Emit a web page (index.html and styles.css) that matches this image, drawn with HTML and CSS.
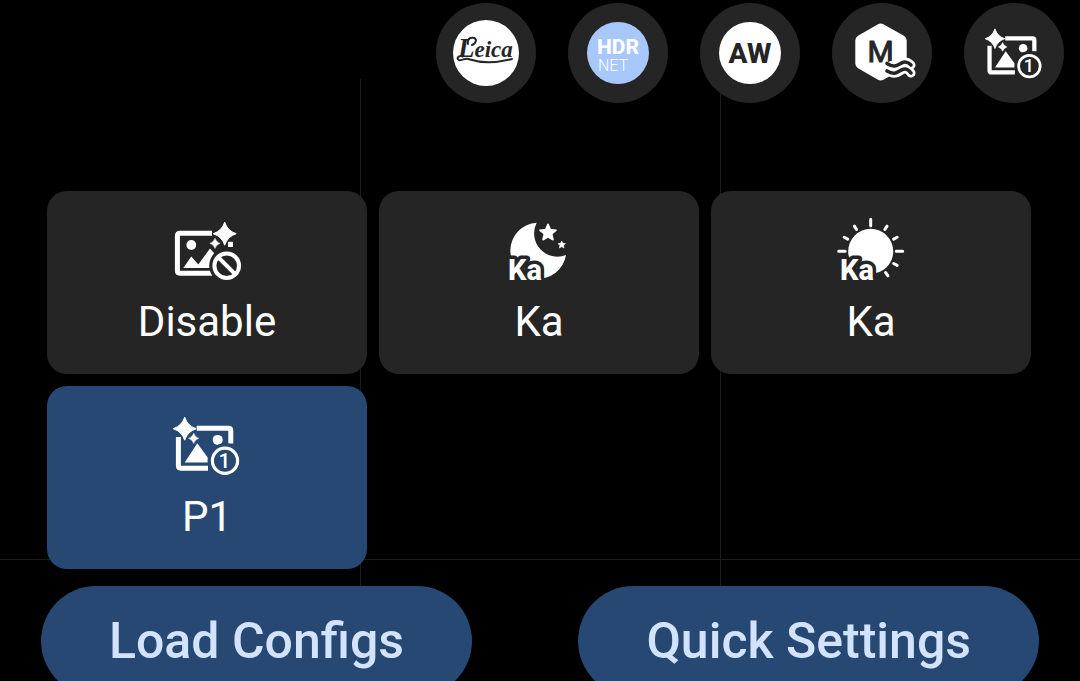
FILE: index.html
```html
<!DOCTYPE html>
<html lang="en">
<head>
<meta charset="utf-8">
<meta name="viewport" content="width=device-width, initial-scale=1">
<title>Camera configs</title>
<link rel="stylesheet" href="styles.css">
</head>
<body>
<svg class="defs" aria-hidden="true">
  <defs>
    <path id="spark" d="M0 -11.5Q2.8 -2.8 11.5 0Q2.8 2.8 0 11.5Q-2.8 2.8 -11.5 0Q-2.8 -2.8 0 -11.5Z" stroke="#fff" stroke-width="1" stroke-linejoin="round"/>
    <path id="star" d="M0 -8.5L2.3 -3.2L8.1 -2.6L3.7 1.2L5 6.9L0 3.9L-5 6.9L-3.7 1.2L-8.1 -2.6L-2.3 -3.2Z" stroke="#fff" stroke-width="1.6" stroke-linejoin="round"/>
    <symbol id="photo-one" viewBox="0 0 70 62">
      <use href="#spark" x="12.7" y="13.7"/>
      <use href="#spark" transform="translate(21.7 23.3) scale(.45)"/>
      <path class="line" d="M24.7 13.2H56.5Q58.8 13.2 58.8 15.5V28.5M6.4 22V50.5Q6.4 53.2 9 53.2H36"/>
      <circle cx="45.7" cy="24.9" r="5"/>
      <path d="M12.7 47.5L25.3 28.3L36 43V47.5Z"/>
      <circle class="gap" cx="53" cy="45.7" r="17.5"/>
      <circle class="ring" cx="53" cy="45.7" r="12.6"/>
      <text class="one" x="52.5" y="53" text-anchor="middle">1</text>
    </symbol>
  </defs>
</svg>
<main class="screen">
  <div class="guides" aria-hidden="true"><i></i><i></i><i></i></div>
  <header class="shortcuts">
    <button class="round" type="button" aria-label="Leica">
      <svg viewBox="0 0 100 100">
        <circle cx="50" cy="50" r="33"/>
        <text class="leica" x="22" y="54"><tspan class="leica-cap">L</tspan>eica</text>
        <path class="flourish" d="M32 41C31 36 34 34.500 37 34.800C41 35 41 40 36 42M27 53.500C22 52 20 56 23 57C27 58 29 54 34 56.500C45 60 60 60 76 56"/>
      </svg>
    </button>
    <button class="round" type="button" aria-label="HDR NET">
      <svg viewBox="0 0 100 100">
        <circle class="sky" cx="50" cy="50" r="31"/>
        <text class="hdr" x="29" y="51">HDR</text>
        <text class="net" x="30" y="68">NET</text>
      </svg>
    </button>
    <button class="round" type="button" aria-label="AW">
      <svg viewBox="0 0 100 100">
        <circle cx="50" cy="50" r="31"/>
        <text class="aw" x="50" y="60" text-anchor="middle">AW</text>
      </svg>
    </button>
    <button class="round" type="button" aria-label="M">
      <svg viewBox="0 0 100 100">
        <path d="M48.7 26L69.2 37.5V60.5L48.7 72L28.8 60.5V37.5Z" stroke="#fff" stroke-width="11" stroke-linejoin="round"/>
        <text class="em" x="48.5" y="59" text-anchor="middle">M</text>
        <path class="wave-edge" d="M59 62.5C66 65 68 59 73 59Q76 59 79 62M59 69.5C66 73 68 66 73 66Q76 66 79 70"/>
        <path class="wave" d="M55 60.5C65 67 67 59 73 59Q76 59 79 62M55 68C65 74 67 66 73 66Q76 66 79 70"/>
      </svg>
    </button>
    <button class="round" type="button" aria-label="P1">
      <svg class="photo"><use href="#photo-one"/></svg>
    </button>
  </header>

  <section class="configs" aria-label="Configs">
    <button class="card" type="button">
      <svg viewBox="0 0 70 62" aria-hidden="true">
        <path class="line" d="M40 13.3H8Q5.4 13.3 5.4 16V50.5Q5.4 53.2 8 53.2H40"/>
        <circle cx="19.3" cy="25" r="4.9"/>
        <path d="M11.3 48L19.3 36.5L26.3 44.5L38 28.5L42 33V48Z"/>
        <use href="#spark" x="52.7" y="13.7"/>
        <use href="#spark" transform="translate(43 23.3) scale(.45)"/>
        <path d="M56 21.8H61V27H56Z"/>
        <circle class="gap" cx="54.7" cy="45.7" r="17.5"/>
        <path class="ban" d="M46 37L63.4 54.4M67 45.7A12.3 12.3 0 1 1 42.4 45.7A12.3 12.3 0 1 1 67 45.7"/>
      </svg>
      <span>Disable</span>
    </button>
    <button class="card" type="button">
      <svg viewBox="0 0 70 62" aria-hidden="true">
        <path d="M32.7 2.7A28 28 0 1 0 62 35A23.3 23.3 0 0 1 32.7 2.7Z"/>
        <use href="#star" x="44" y="12.8"/>
        <use href="#star" transform="translate(57.7 24.8) scale(.45)"/>
        <text class="tag" x="4" y="60">Ka</text>
      </svg>
      <span>Ka</span>
    </button>
    <button class="card" type="button">
      <svg viewBox="0 0 70 62" aria-hidden="true">
        <circle cx="34.7" cy="31.3" r="22.5"/>
        <g class="rays" transform="translate(34.7 31.3)">
          <path d="M0 -25.5V-32M25.5 0H32M-25.5 0H-32"/>
          <path d="M0 -26V-30" transform="rotate(33)"/>
          <path d="M0 -26V-30" transform="rotate(62)"/>
          <path d="M0 -26V-30" transform="rotate(118)"/>
          <path d="M0 -26V-30" transform="rotate(145)"/>
          <path d="M0 -26V-30" transform="rotate(-33)"/>
          <path d="M0 -26V-30" transform="rotate(-62)"/>
        </g>
        <text class="tag" x="4" y="60">Ka</text>
      </svg>
      <span>Ka</span>
    </button>
    <button class="card selected" type="button" aria-pressed="true">
      <svg aria-hidden="true"><use href="#photo-one"/></svg>
      <span>P1</span>
    </button>
  </section>

  <footer class="actions">
    <button class="pill" type="button">Load Configs</button>
    <button class="pill" type="button">Quick Settings</button>
  </footer>
</main>
</body>
</html>
```

FILE: styles.css
```css
* { box-sizing: border-box; }

body {
  margin: 0;
  background: #000;
  color: #fff;
  font-family: Roboto, "Noto Sans", sans-serif;
}

button {
  border: 0;
  margin: 0;
  padding: 0;
  color: inherit;
  font: inherit;
  cursor: pointer;
}

svg { display: block; fill: #fff; overflow: visible; }
.defs { position: absolute; width: 0; height: 0; }

.screen {
  position: relative;
  height: 100vh;
  overflow: hidden;
}

/* composition guides behind the controls */
.guides {
  position: absolute;
  top: 79px;
  left: 0;
  right: 0;
  height: 481px;
  display: grid;
  grid-template-columns: repeat(3, 1fr);
  border-bottom: 1px solid #1c1c1c;
}
.guides i { height: 520px; }
.guides i + i { border-left: 1px solid #1c1c1c; }

.shortcuts {
  position: relative;
  display: flex;
  justify-content: flex-end;
  gap: 32px;
  padding: 3px 16px 0;
}
.round {
  --surface: #252525;
  display: grid;
  place-items: center;
  width: 100px;
  height: 100px;
  border-radius: 50%;
  background: var(--surface);
}
.round svg { width: 100px; height: 100px; }
.round .photo { width: 60px; height: 53px; }

.configs {
  position: relative;
  display: grid;
  grid-template-columns: repeat(3, 1fr);
  gap: 12px;
  padding: 88px 49px 0 47px;
}
.card {
  --surface: #252525;
  display: flex;
  flex-direction: column;
  align-items: center;
  gap: 15px;
  padding: 29px 0 27px;
  border-radius: 20px;
  background: var(--surface);
  font-size: 42px;
  line-height: 50px;
}
.card.selected { --surface: #264872; }
.card svg { width: 70px; height: 62px; }

.actions {
  position: relative;
  display: flex;
  justify-content: space-between;
  padding: 17px 41px 0;
}
.pill {
  padding: 0 68px;
  border-radius: 55px;
  background: #264872;
  color: #d3e3fd;
  font-size: 50px;
  font-weight: 500;
  line-height: 110px;
  white-space: nowrap;
}

/* icon parts */
.line { fill: none; stroke: #fff; stroke-width: 5; }
.gap { fill: var(--surface); }
.ring { fill: none; stroke: #fff; stroke-width: 3.2; }
.ban { fill: none; stroke: #fff; stroke-width: 4; }
.one { font-size: 21px; font-weight: 500; }
.rays { fill: none; stroke: #fff; stroke-width: 3; stroke-linecap: round; }
.tag {
  font-size: 29px;
  font-weight: 800;
  stroke: var(--surface);
  stroke-width: 7px;
  stroke-linejoin: round;
  paint-order: stroke;
}
.sky { fill: #a8c7fa; }
.hdr { font-size: 21px; font-weight: 800; }
.net { font-size: 16px; font-weight: 300; }
.aw { fill: #252525; font-size: 28px; font-weight: 800; }
.em { fill: #252525; stroke: #252525; stroke-width: 1; stroke-linejoin: round; font-size: 30px; font-weight: 400; }
.leica { fill: #252525; font: italic 700 23px "Liberation Serif", serif; }
.leica-cap { font-size: 27px; }
.flourish { fill: none; stroke: #252525; stroke-width: 2; stroke-linecap: round; }
.wave-edge { fill: none; stroke: #fff; stroke-width: 9; stroke-linecap: round; stroke-linejoin: round; }
.wave { fill: none; stroke: #252525; stroke-width: 3.6; stroke-linecap: round; }
```
